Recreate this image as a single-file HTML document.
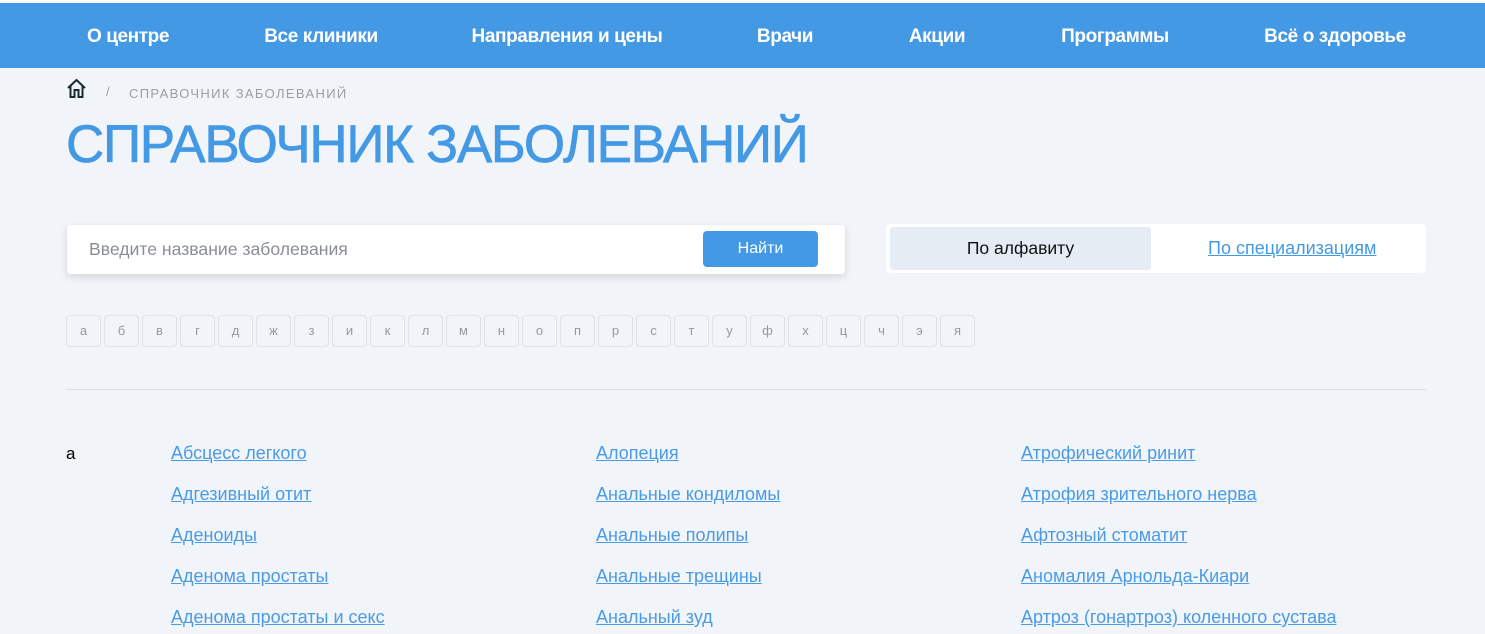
<!DOCTYPE html>
<html><head><meta charset="utf-8"><style>
html,body{margin:0;width:1485px;height:634px;overflow:hidden}
body{background:#f1f4f9;font-family:"Liberation Sans",sans-serif;position:relative}
.top{position:absolute;top:0;left:0;right:0;height:3px;background:#fff}
nav{position:absolute;top:3px;left:0;width:1485px;height:65px;background:#4499e5}
nav span{position:absolute;top:23px;color:#fff;font-weight:bold;font-size:19px;transform:translateX(-50%);white-space:nowrap;letter-spacing:-0.4px}
.bc{position:absolute;top:86px;left:129px;font-size:13px;color:#9a9ea5;letter-spacing:1.35px}
.sl{position:absolute;top:84px;left:106px;color:#9a9ea5;font-size:13px}
h1{position:absolute;top:114px;left:66px;margin:0;font-weight:normal;color:#4499e5;font-size:53px;letter-spacing:-1.3px;white-space:nowrap;-webkit-text-stroke:0.7px #4499e5}
.search{position:absolute;left:67px;top:225px;width:778px;height:49px;background:#fff;border-radius:4px;box-shadow:0 3px 8px rgba(0,0,0,.12)}
.search .ph{position:absolute;left:22px;top:14px;font-size:17.6px;color:#8a8e94}
.btn{position:absolute;left:636px;top:6px;width:115px;height:36px;background:#4499e5;border-radius:4px;color:#fff;font-size:16px;text-align:center;line-height:36px}
.tabs{position:absolute;left:886px;top:224px;width:540px;height:49px;background:#fff;border-radius:4px}
.act{position:absolute;left:4px;top:3px;width:261px;height:43px;background:#e6ecf4;border-radius:3px;text-align:center;line-height:43px;font-size:17.5px;color:#111}
.t2{position:absolute;left:322px;top:14px;font-size:18px;color:#4499e5;text-decoration:underline}
.letters{position:absolute;left:66px;top:315px}
.letters span{float:left;width:33px;height:30px;margin-right:3px;border:1px solid #dfe2e7;border-radius:4px;text-align:center;line-height:30px;font-size:13px;color:#999}
hr{position:absolute;left:66px;width:1360px;margin:0;border:0;border-top:1px solid #dadde2}
.a{position:absolute;left:66px;top:444px;font-size:17px}
.col{position:absolute;top:443px}
.col a{display:block;height:41px;font-size:18px;color:#4a9be6;text-decoration:underline}
</style></head><body>
<div class="top"></div>
<nav>
<span style="left:128px">О центре</span>
<span style="left:321px">Все клиники</span>
<span style="left:567px">Направления и цены</span>
<span style="left:785px">Врачи</span>
<span style="left:937px">Акции</span>
<span style="left:1115px">Программы</span>
<span style="left:1335px">Всё о здоровье</span>
</nav>
<svg style="position:absolute;left:66px;top:78px" width="21" height="21" viewBox="0 0 21 21"><path d="M2 10 L10.5 2 L19 10 M4.5 8 V19 H8.5 V12 H12.5 V19 H16.5 V8" fill="none" stroke="#1c2a33" stroke-width="2"/></svg>
<div class="sl">/</div>
<div class="bc">СПРАВОЧНИК ЗАБОЛЕВАНИЙ</div>
<h1>СПРАВОЧНИК ЗАБОЛЕВАНИЙ</h1>
<div class="search"><div class="ph">Введите название заболевания</div><div class="btn">Найти</div></div>
<div class="tabs"><div class="act">По алфавиту</div><div class="t2">По специализациям</div></div>
<div class="letters"><span>а</span><span>б</span><span>в</span><span>г</span><span>д</span><span>ж</span><span>з</span><span>и</span><span>к</span><span>л</span><span>м</span><span>н</span><span>о</span><span>п</span><span>р</span><span>с</span><span>т</span><span>у</span><span>ф</span><span>х</span><span>ц</span><span>ч</span><span>э</span><span>я</span></div>
<hr style="top:389px">
<div class="a">а</div>
<div class="col" style="left:171px"><a>Абсцесс легкого</a><a>Адгезивный отит</a><a>Аденоиды</a><a>Аденома простаты</a><a>Аденома простаты и секс</a></div>
<div class="col" style="left:596px"><a>Алопеция</a><a>Анальные кондиломы</a><a>Анальные полипы</a><a>Анальные трещины</a><a>Анальный зуд</a></div>
<div class="col" style="left:1021px"><a>Атрофический ринит</a><a>Атрофия зрительного нерва</a><a>Афтозный стоматит</a><a>Аномалия Арнольда-Киари</a><a>Артроз (гонартроз) коленного сустава</a></div>
</body></html>
